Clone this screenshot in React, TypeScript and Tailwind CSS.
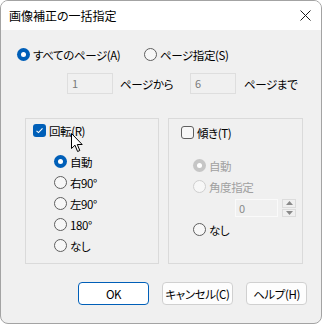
import React from "react";

const font = "font-['Noto_Sans_CJK_JP','Noto_Sans',sans-serif] [font-feature-settings:'palt']";
const txt = "text-[11.5px] leading-[16px] tracking-[-0.4px] whitespace-nowrap";

const Radio = ({ checked = false, disabled = false }: { checked?: boolean; disabled?: boolean }) => {
  if (checked) {
    return (
      <span
        className={`w-[13px] h-[13px] rounded-full flex items-center justify-center shrink-0 ${
          disabled ? "bg-[#c6c6c6]" : "bg-[#005fb8]"
        }`}
      >
        <span className="w-[5px] h-[5px] rounded-full bg-white" />
      </span>
    );
  }
  return (
    <span
      className={`w-[13px] h-[13px] rounded-full border shrink-0 ${
        disabled ? "border-[#cfcfcf] bg-[#f7f7f7]" : "border-[#5f5f5f] bg-[#f7f7f7]"
      }`}
    />
  );
};

const Check = ({ checked = false }: { checked?: boolean }) =>
  checked ? (
    <span className="w-[13px] h-[13px] rounded-[3px] bg-[#005fb8] flex items-center justify-center shrink-0">
      <svg width="9" height="9" viewBox="0 0 9 9">
        <path d="M1.5 4.8 L3.5 6.6 L7.5 2.4" fill="none" stroke="white" strokeWidth="1.1" />
      </svg>
    </span>
  ) : (
    <span className="w-[13px] h-[13px] rounded-[3px] border border-[#5f5f5f] bg-[#f7f7f7] shrink-0" />
  );

const RadioRow = ({ label, checked, disabled }: { label: string; checked?: boolean; disabled?: boolean }) => (
  <div className="h-[21px] flex items-center gap-[3px]">
    <Radio checked={checked} disabled={disabled} />
    <span className={`${txt} ${disabled ? "text-[#a0a0a0]" : "text-black"}`}>{label}</span>
  </div>
);

export default function App() {
  return (
    <div className={`w-[322px] h-[324px] relative bg-[#f0f0f0] border border-[#a3a3a3] rounded-[8px] overflow-hidden text-black ${font}`}>
      {/* title bar */}
      <div className="h-[29px] bg-white flex items-center justify-between pl-[8px] pr-[10px]">
        <span className="text-[12px] leading-[16px]">画像補正の一括指定</span>
        <svg width="11" height="11" viewBox="0 0 11 11">
          <path d="M0.5 0.5 L10.5 10.5 M10.5 0.5 L0.5 10.5" stroke="#1a1a1a" strokeWidth="1" />
        </svg>
      </div>

      {/* page range */}
      <div className="pt-[18px] pl-[16px] flex items-center h-[31px]">
        <div className="w-[127px] flex items-center gap-[3px]">
          <Radio checked />
          <span className={txt}>すべてのページ(A)</span>
        </div>
        <div className="flex items-center gap-[3px]">
          <Radio />
          <span className={txt}>ページ指定(S)</span>
        </div>
      </div>

      <div className="mt-[12px] pl-[66px] flex items-center">
        <div className="w-[46px] h-[21px] border border-[#dedede] bg-[#f0f0f0] px-[4px] flex items-center text-[11px] text-[#7a7a7a]">1</div>
        <span className={`ml-[7px] w-[70px] ${txt}`}>ページから</span>
        <div className="w-[46px] h-[21px] border border-[#dedede] bg-[#f0f0f0] px-[4px] flex items-center text-[11px] text-[#7a7a7a]">6</div>
        <span className={`ml-[8px] ${txt}`}>ページまで</span>
      </div>

      {/* groups */}
      <div className="mt-[24px] pl-[24px] flex gap-[9px]">
        <div className="w-[134px] h-[146px] border border-[#dadada] pl-[7px] pt-[5px]">
          <div className="flex items-center gap-[3px] h-[13px]">
            <Check checked />
            <span className={txt}>回転(R)</span>
          </div>
          <div className="mt-[14px] pl-[21px]">
            <RadioRow label="自動" checked />
            <RadioRow label="右90°" />
            <RadioRow label="左90°" />
            <RadioRow label="180°" />
            <RadioRow label="なし" />
          </div>
        </div>

        <div className="w-[135px] h-[146px] border border-[#dadada] pl-[12px] pt-[7px]">
          <div className="flex items-center gap-[3px] h-[13px]">
            <Check />
            <span className={txt}>傾き(T)</span>
          </div>
          <div className="mt-[16px] pl-[12px]">
            <RadioRow label="自動" checked disabled />
            <RadioRow label="角度指定" disabled />
            <div className="h-[22px] flex items-center pl-[42px] gap-[4px]">
              <div className="w-[43px] h-[18px] border border-[#fafafa] bg-[#f0f0f0] px-[3px] flex items-center text-[11px] text-[#8a8a8a]">0</div>
              <div className="w-[14px] h-[18px] flex flex-col gap-[1px]">
                <div className="flex-1 border border-[#dcdcdc] flex items-center justify-center">
                  <svg width="7" height="4" viewBox="0 0 7 4"><path d="M3.5 0 L7 4 L0 4Z" fill="#8a8a8a" /></svg>
                </div>
                <div className="flex-1 border border-[#dcdcdc] flex items-center justify-center">
                  <svg width="7" height="4" viewBox="0 0 7 4"><path d="M0 0 L7 0 L3.5 4Z" fill="#8a8a8a" /></svg>
                </div>
              </div>
            </div>
            <RadioRow label="なし" />
          </div>
        </div>
      </div>

      {/* buttons */}
      <div className="mt-[18px] pr-[14px] flex justify-end gap-[13px]">
        <button className={`w-[71px] h-[23px] rounded-[4px] border border-[#005fb8] bg-white ${txt}`}>OK</button>
        <button className={`w-[71px] h-[23px] rounded-[4px] border border-[#d0d0d0] bg-[#fdfdfd] ${txt}`}>キャンセル(C)</button>
        <button className={`w-[61px] h-[23px] rounded-[4px] border border-[#d0d0d0] bg-[#fdfdfd] ${txt}`}>ヘルプ(H)</button>
      </div>

      {/* mouse cursor */}
      <svg className="absolute left-[70px] top-[132px]" width="13" height="20" viewBox="0 0 13 20">
        <path d="M0.5 0.5 L0.5 15.5 L4 12.2 L6.6 18.5 L8.8 17.5 L6.3 11.5 L11.2 11.5 Z" fill="white" stroke="black" strokeWidth="1" strokeLinejoin="round" />
      </svg>
    </div>
  );
}
